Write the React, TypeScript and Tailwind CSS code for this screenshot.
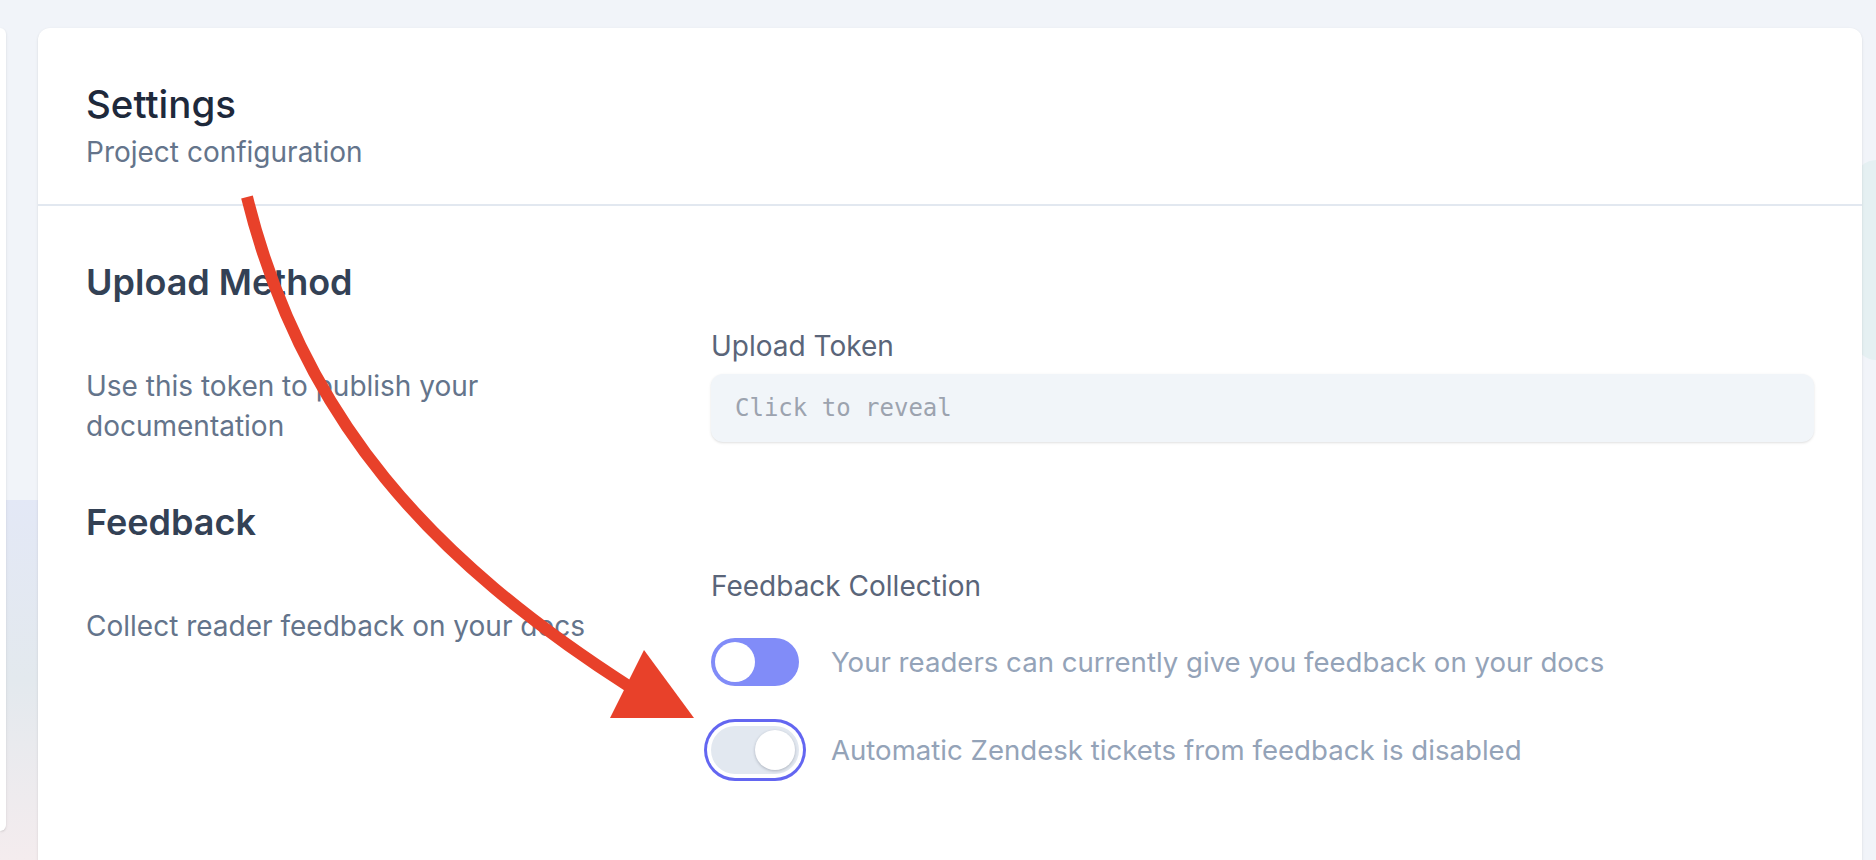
import React from "react";

function Toggle({ on, focused }: { on: boolean; focused?: boolean }) {
  return (
    <div
      className={
        on
          ? "flex h-12 w-[88px] shrink-0 items-center justify-start rounded-full bg-[#818cf8] p-1"
          : "flex h-12 w-[88px] shrink-0 items-center justify-end rounded-full bg-[#e2e8f0] p-1 ring-[3px] ring-[#6366f1] ring-offset-[4px] ring-offset-white"
      }
    >
      <span
        className={
          focused
            ? "h-10 w-10 rounded-full bg-white shadow-[0_1px_3px_rgba(15,23,42,0.25)]"
            : "h-10 w-10 rounded-full bg-white"
        }
      />
    </div>
  );
}

function Arrow() {
  return (
    <svg
      className="pointer-events-none absolute left-0 top-0"
      width="1876"
      height="860"
      viewBox="0 0 1876 860"
    >
      <path
        d="M247 197 C302 420 432 560 630 687"
        fill="none"
        stroke="#e8412a"
        strokeWidth="12"
      />
      <polygon points="644,650 610,718 694,718" fill="#e8412a" />
    </svg>
  );
}

export default function App() {
  return (
    <div
      className="relative h-[860px] w-[1876px] overflow-hidden bg-[#f1f4f9]"
      style={{ fontFamily: "Inter, 'Noto Sans', sans-serif" }}
    >
      {/* soft background tints peeking around the panels */}
      <div className="absolute left-0 top-[500px] h-[360px] w-[40px] bg-gradient-to-b from-[#e3e8f6] via-[#e3e9ee] to-[#f4ecee]" />
      <div className="absolute right-0 top-[160px] h-[200px] w-[20px] rounded-l-full bg-[#e5f0f2]" />

      <div className="relative flex gap-8 pt-[28px]">
        <div className="h-[803px] w-[6px] shrink-0 rounded-r-xl bg-white shadow" />

        <div className="h-[900px] w-[1824px] shrink-0 rounded-xl bg-white shadow-sm">
          <div className="border-b-2 border-[#e2e8f0] px-12 pb-8 pt-12">
            <h2 className="text-[38.5px] font-medium leading-[56px] text-[#1e293b]">Settings</h2>
            <p className="text-[28px] leading-[40px] text-[#64748b]">Project configuration</p>
          </div>

          <div className="px-12 pt-12">
            <section>
              <h3 className="mb-4 text-[36px] font-semibold leading-[56px] text-[#334155]">
                Upload Method
              </h3>
              <div className="flex">
                <p className="w-[625px] shrink-0 pr-[85px] pt-10 text-[28px] leading-[40px] text-[#64748b]">
                  Use this token to publish your documentation
                </p>
                <div className="flex-1">
                  <label className="block text-[28px] leading-[40px] text-[#5a6579]">
                    Upload Token
                  </label>
                  <div className="mt-2 flex h-[68px] items-center rounded-xl bg-[#f1f5f9] px-6 shadow-sm">
                    <span
                      className="text-[24px] text-[#9ca3af]"
                      style={{ fontFamily: "'DejaVu Sans Mono', 'Liberation Mono', monospace" }}
                    >
                      Click to reveal
                    </span>
                  </div>
                </div>
              </div>
            </section>

            <section className="mt-12">
              <h3 className="mb-4 text-[36px] font-semibold leading-[56px] text-[#334155]">Feedback</h3>
              <div className="flex">
                <p className="w-[625px] shrink-0 pr-[85px] pt-10 text-[28px] leading-[40px] text-[#64748b]">
                  Collect reader feedback on your docs
                </p>
                <div className="flex-1">
                  <label className="block text-[28px] leading-[40px] text-[#5a6579]">
                    Feedback Collection
                  </label>
                  <div className="mt-8 flex flex-col gap-10">
                    <div className="flex items-center gap-8">
                      <Toggle on />
                      <span className="text-[27.6px] leading-[40px] text-[#94a3b8]">
                        Your readers can currently give you feedback on your docs
                      </span>
                    </div>
                    <div className="flex items-center gap-8">
                      <Toggle on={false} focused />
                      <span className="text-[27.6px] leading-[40px] text-[#94a3b8]">
                        Automatic Zendesk tickets from feedback is disabled
                      </span>
                    </div>
                  </div>
                </div>
              </div>
            </section>
          </div>
        </div>
      </div>

      <Arrow />
    </div>
  );
}
